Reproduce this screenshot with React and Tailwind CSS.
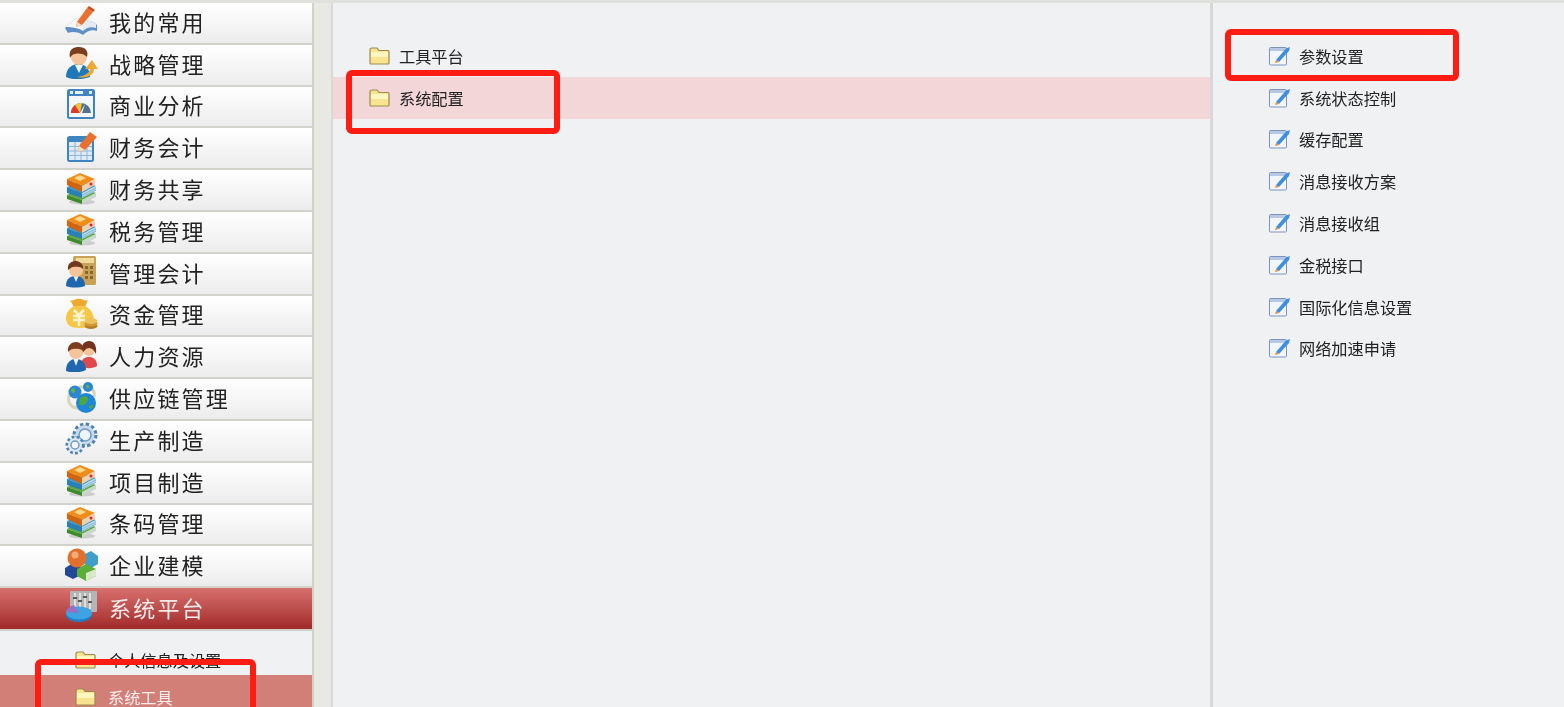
import React from "react";

const cjk = { fontFamily: '"Noto Sans CJK SC", "Liberation Sans", sans-serif' };

// small drawings for the menu
const Books = () => (
  <svg viewBox="0 0 33 33" className="w-[33px] h-[33px]">
    <ellipse cx="17" cy="30" rx="13" ry="2.5" fill="#aaa" opacity="0.5" />
    <path d="M2 23 L16 16 L31 21 L17 28 Z" fill="#5fa845" />
    <path d="M2 23 L17 28 L17 32 L2 27 Z" fill="#3f8a2c" />
    <path d="M17 28 L31 21 L31 25 L17 32 Z" fill="#c9d8cb" />
    <path d="M2 15 L16 9 L31 14 L17 21 Z" fill="#3b93c9" />
    <path d="M2 15 L17 21 L17 26 L2 21 Z" fill="#2a7fb5" />
    <path d="M17 21 L31 14 L31 19 L17 26 Z" fill="#bcdcec" />
    <path d="M17 23 L31 16 M17 25 L31 18" stroke="#5d9cc4" strokeWidth="0.6" />
    <path d="M2 7 L15 1 L30 7 L17 14 Z" fill="#f08c1a" />
    <path d="M2 7 L17 14 L17 20 L2 13 Z" fill="#d2640f" />
    <path d="M17 14 L30 7 L30 13 L17 20 Z" fill="#eed2b0" />
    <path d="M9 6 L15 3 L21 6 L15 9 Z" fill="#fbd78a" />
    <circle cx="26" cy="12" r="1.5" fill="#d8232a" />
  </svg>
);

const BookPencil = () => (
  <svg viewBox="0 0 33 33" className="w-[33px] h-[33px]">
    <path d="M0 24 L11 14 C15 14 17 16 18 18 C21 16 27 16 32 21 L32 27 C27 25 22 27 18 31 C14 28 7 27 3 29 Z" fill="#5f8fc4" />
    <path d="M1 23 L11 14 C15 14 17 16 18 18 L18 27 C14 24 7 23 1 23 Z" fill="#f5f7fa" />
    <path d="M18 18 C21 16 26 16 31 20 L31 24 C26 22 21 24 18 27 Z" fill="#e6ebf2" />
    <path d="M12 18 L22 4 L28 8 L17 21 L11 23 Z" fill="#e9702e" />
    <path d="M22 4 L24 2 L30 6 L28 8 Z" fill="#c94f1d" />
    <path d="M11 23 L12 18 L17 21 Z" fill="#f4dcc0" />
  </svg>
);

const UserArrow = () => (
  <svg viewBox="0 0 33 33" className="w-[33px] h-[33px]">
    <path d="M1 31 C1 22 7 18 14 18 C20 18 25 23 25 31 C16 34 7 34 1 31 Z" fill="#1f78b8" />
    <path d="M10 19 L14 27 L18 19 Z" fill="#f2f2f2" />
    <circle cx="14" cy="11" r="8" fill="#f4c49a" />
    <path d="M5 12 C3 3 9 1 14 1 C20 1 24 5 22 11 C19 7 12 7 10 8 C8 8 6 10 5 12 Z" fill="#7a3d1e" />
    <path d="M12 31 C21 30 25 26 25 23 L20 23 L27 14 L33 23 L29 23 C29 29 22 33 12 31 Z" fill="#eba838" />
  </svg>
);

const GaugeWin = () => (
  <svg viewBox="0 0 33 33" className="w-[33px] h-[33px]">
    <rect x="2" y="1" width="28" height="30" rx="2.5" fill="#3d84c0" />
    <rect x="4" y="8" width="24" height="21" fill="#f3f7fb" />
    <rect x="5" y="3" width="3" height="3" fill="#e3f0fa" />
    <rect x="10" y="3" width="8" height="3" fill="#e3f0fa" />
    <rect x="24" y="3" width="3" height="3" fill="#e3f0fa" />
    <path d="M6 25 A10 10 0 0 1 26 25 Z" fill="#54708f" />
    <path d="M6 25 A10 10 0 0 1 10 17 L15 25 Z" fill="#dd3a2a" />
    <path d="M10 17 A10 10 0 0 1 17 15 L15 25 Z" fill="#f1c232" />
    <path d="M15 25 L20 16 L17 25 Z" fill="#ffffff" />
  </svg>
);

const TablePencil = () => (
  <svg viewBox="0 0 33 33" className="w-[33px] h-[33px]">
    <rect x="2" y="6" width="27" height="26" rx="2.5" fill="#3d84c0" />
    <rect x="4" y="12" width="23" height="18" fill="#dfeaf4" />
    <path d="M4 16.5 H27 M4 21 H27 M4 25.5 H27 M10 12 V30 M16 12 V30 M22 12 V30" stroke="#8db7d9" strokeWidth="1" />
    <path d="M14 16 L25 2 L32 7 L20 20 L13 22 Z" fill="#e9702e" />
    <path d="M13 22 L14 16 L20 20 Z" fill="#f4dcc0" />
  </svg>
);

const CalcUser = () => (
  <svg viewBox="0 0 33 33" className="w-[33px] h-[33px]">
    <rect x="8" y="1" width="23" height="29" rx="1.5" fill="#c9a25a" />
    <rect x="11" y="3" width="18" height="5" fill="#f1dc9c" />
    <path d="M20 11 h3 v3 h-3z M25 11 h3 v3 h-3z M20 16 h3 v3 h-3z M25 16 h3 v3 h-3z M20 21 h3 v3 h-3z M25 21 h3 v3 h-3z" fill="#86682f" />
    <path d="M1 31 C1 23 6 21 11 21 C16 21 20 24 20 31 C14 33 6 33 1 31 Z" fill="#1f66ae" />
    <path d="M8.5 21 L11 27 L13.5 21 Z" fill="#eaf2fa" />
    <circle cx="11" cy="15" r="7" fill="#f4c49a" />
    <path d="M3 15 C2 8 7 6 11 6 C15 6 19 10 18 14 C15 11 10 12 8 12 C6 12 5 14 3 15 Z" fill="#6f3a1d" />
  </svg>
);

const MoneyBag = () => (
  <svg viewBox="0 0 33 33" className="w-[33px] h-[33px]">
    <path d="M5 3 C9 5 11 1 14 2 C17 1 19 5 23 3 L20 10 L9 10 Z" fill="#eeaa30" />
    <path d="M9 9 H20 C27 13 30 19 28 25 C26 30 20 31 14 31 C6 31 1 28 1 21 C1 16 4 12 9 9 Z" fill="#f6c648" />
    <path d="M9 13 L14 18 L19 13 M8 19 H20 M8 23 H20 M14 18 V29" stroke="#fff6cf" strokeWidth="2.6" fill="none" />
    <ellipse cx="26" cy="29" rx="6.5" ry="3" fill="#b77e25" />
    <ellipse cx="26" cy="26.5" rx="6.5" ry="3" fill="#d29a35" />
    <ellipse cx="26" cy="24" rx="6.5" ry="3" fill="#ecc25a" />
  </svg>
);

const People = () => (
  <svg viewBox="0 0 33 33" className="w-[33px] h-[33px]">
    <path d="M16 26 C16 20 20 18 24 18 C28 18 32 20 32 27 C27 30 20 30 16 26 Z" fill="#e0484a" />
    <circle cx="24" cy="11" r="6" fill="#f4c49a" />
    <path d="M17 15 C15 5 20 2 24 2 C29 2 32 6 31 15 C29 11 27 9 24 9 C21 9 19 12 17 15 Z" fill="#74331d" />
    <path d="M1 32 C1 23 6 20 11 20 C17 20 21 24 21 31 C15 34 6 34 1 32 Z" fill="#1f66ae" />
    <path d="M8.5 20 L11 27 L13.5 20 Z" fill="#eaf2fa" />
    <circle cx="11" cy="13" r="7" fill="#f4c49a" />
    <path d="M3 13 C2 6 7 3 11 3 C16 3 20 8 18 12 C15 9 10 10 8 10 C6 10 4 12 3 13 Z" fill="#7a3d1e" />
  </svg>
);

const Globes = () => (
  <svg viewBox="0 0 33 33" className="w-[33px] h-[33px]">
    <path d="M8 10 C2 14 2 22 8 26 L15 28 M14 6 H24 C29 8 30 12 29 16" stroke="#d9d5b8" strokeWidth="3" fill="none" />
    <circle cx="10" cy="11" r="6.5" fill="#2f86d0" />
    <path d="M6 8 C9 6 11 8 10 11 C8 13 6 12 6 8 Z" fill="#5db24a" />
    <circle cx="23" cy="6" r="5" fill="#2f86d0" />
    <path d="M21 4 C23 3 25 5 24 7 C22 8 21 7 21 4 Z" fill="#5db24a" />
    <circle cx="21" cy="22" r="10" fill="#1f86d8" />
    <path d="M15 17 C18 14 24 15 23 19 C21 24 17 26 14 23 Z M24 25 C27 23 29 24 28 26 C26 29 24 28 24 25 Z" fill="#4ea83f" />
  </svg>
);

const Gears = () => (
  <svg viewBox="0 0 33 33" className="w-[33px] h-[33px]">
    <circle cx="20" cy="13" r="10" fill="#c6d9ea" />
    <circle cx="20" cy="13" r="11" fill="none" stroke="#4f82b0" strokeWidth="3" strokeDasharray="3.4 2.4" />
    <circle cx="20" cy="13" r="6" fill="#eef3f8" stroke="#6f9cc4" strokeWidth="1.5" />
    <circle cx="10" cy="23" r="8" fill="#dbe7f1" />
    <circle cx="10" cy="23" r="8.2" fill="none" stroke="#4f82b0" strokeWidth="2.6" strokeDasharray="2.8 2.2" />
    <circle cx="10" cy="23" r="4" fill="#f5f5f5" stroke="#6f9cc4" strokeWidth="1.5" />
  </svg>
);

const Blocks = () => (
  <svg viewBox="0 0 33 33" className="w-[33px] h-[33px]">
    <path d="M18 7 L26 3 L33 8 L33 16 L26 20 L18 15 Z" fill="#3f9fc9" />
    <path d="M0 20 L8 15 L16 19 L16 27 L8 31 L0 27 Z" fill="#24479a" />
    <path d="M12 21 L21 16 L31 21 L31 28 L21 33 L12 28 Z" fill="#5cae3a" />
    <path d="M21 25 L31 21 L31 28 L21 33 Z" fill="#d9e8c8" />
    <circle cx="12" cy="10" r="9.5" fill="#e0702c" />
    <circle cx="10" cy="7" r="3.5" fill="#f5ab74" />
  </svg>
);

const Sliders = () => (
  <svg viewBox="0 0 33 33" className="w-[33px] h-[33px]">
    <rect x="5" y="1" width="27" height="21" rx="1" fill="#b5b5b5" />
    <path d="M10 3 V19 M15 3 V19 M20 3 V19 M25 3 V19" stroke="#f2f2f2" strokeWidth="1.4" />
    <path d="M8 8 h4 M13 11 h4 M18 7 h4 M23 12 h4" stroke="#5a5a5a" strokeWidth="2" />
    <ellipse cx="14" cy="25" rx="13" ry="7" fill="#1f7fc7" />
    <ellipse cx="14" cy="23" rx="13" ry="6.5" fill="#3ea3e3" />
    <path d="M1 22 L14 23 L9 15 C5 16 2 18 1 22 Z" fill="#9a6ec0" />
  </svg>
);

const Folder = () => (
  <svg viewBox="0 0 21 18" className="w-[21px] h-[18px]">
    <path d="M1 3 C1 1.5 2 1 3 1 H8 L10 3.5 H19 C19.6 3.5 20 4 20 4.5 V16 C20 16.6 19.6 17 19 17 H2 C1.4 17 1 16.6 1 16 Z" fill="#f8e48e" stroke="#9c8a52" strokeWidth="1.2" />
    <path d="M2 5 H19 V10 H2 Z" fill="#fff6c0" />
  </svg>
);

const NoteEdit = () => (
  <svg viewBox="0 0 22 20" className="w-[22px] h-[20px]">
    <rect x="0.5" y="1.5" width="17" height="17.5" rx="1" fill="#f2f6fb" stroke="#7c93be" />
    <rect x="1" y="2" width="16" height="3" fill="#b6c8e4" />
    <path d="M7 14 L17 2.5 L21 1 L20 5 L10 16 Z" fill="#3f8fe0" />
    <path d="M6 17 L7 14 L10 16 Z" fill="#ef8a2a" />
  </svg>
);

const menu = [
  { name: "我的常用", icon: BookPencil },
  { name: "战略管理", icon: UserArrow },
  { name: "商业分析", icon: GaugeWin },
  { name: "财务会计", icon: TablePencil },
  { name: "财务共享", icon: Books },
  { name: "税务管理", icon: Books },
  { name: "管理会计", icon: CalcUser },
  { name: "资金管理", icon: MoneyBag },
  { name: "人力资源", icon: People },
  { name: "供应链管理", icon: Globes },
  { name: "生产制造", icon: Gears },
  { name: "项目制造", icon: Books },
  { name: "条码管理", icon: Books },
  { name: "企业建模", icon: Blocks },
];

const settings = [
  "参数设置",
  "系统状态控制",
  "缓存配置",
  "消息接收方案",
  "消息接收组",
  "金税接口",
  "国际化信息设置",
  "网络加速申请",
];

const MenuRow = ({ name, icon: Icon }) => (
  <div className="flex items-center shrink-0 h-[41.8px] pl-[65px] pb-[4px] gap-[11px] border-b-2 border-[#d2d2cc] bg-gradient-to-b from-white to-[#ececec]">
    <Icon />
    <span className="text-[22px] leading-[24px] tracking-[2.2px] text-[#222]">{name}</span>
  </div>
);

const RedBox = ({ className }) => (
  <div className={`absolute border-[6px] border-[#ff1c12] rounded-[6px] ${className}`} />
);

export default function App() {
  return (
    <div style={cjk} className="relative h-[707px] w-full overflow-hidden flex flex-col bg-[#e8e8e4] blur-[0.4px]">
      <div className="h-[3px] shrink-0 bg-[#e0e0dc]" />
      <div className="flex flex-1 min-h-0">
        {/* left menu */}
        <div className="w-[314px] shrink-0 flex flex-col border-r-2 border-[#d2d2cc] bg-[#f0f1f3]">
          {menu.map((m) => (
            <MenuRow key={m.name} {...m} />
          ))}
          <div className="flex items-center shrink-0 h-[43px] pl-[65px] pb-[4px] gap-[11px] border-b-2 border-[#cfcfca] bg-gradient-to-b from-[#d8706e] to-[#a0282a]">
            <Sliders />
            <span className="text-[22px] leading-[24px] tracking-[2.2px] text-[#f6eaea]">系统平台</span>
          </div>
          <div className="pt-[8px]">
            <div className="flex items-center shrink-0 h-[36px] pt-[5px] pl-[75px] gap-[12px] text-[16.2px] leading-[16px] text-[#222]">
              <Folder />
              个人信息及设置
            </div>
            <div className="flex items-center shrink-0 h-[32px] pt-[12px] pl-[75px] gap-[12px] text-[16.2px] leading-[16px] text-[#f8eeee] bg-[#d27f78]">
              <Folder />
              系统工具
            </div>
          </div>
        </div>

        {/* folders */}
        <div className="ml-[17px] flex-1 min-w-0 border-l-2 border-[#d8d8d4] bg-[#f0f1f3] pt-[32px]">
          <div className="flex items-center h-[41.8px] pl-[36px] gap-[9px] text-[16.2px] text-[#222]">
            <Folder />
            工具平台
          </div>
          <div className="flex items-center h-[41.8px] pl-[36px] gap-[9px] text-[16.2px] text-[#222] bg-[#f3d6d7]">
            <Folder />
            系统配置
          </div>
        </div>

        {/* settings list */}
        <div className="w-[354px] shrink-0 border-l-[3px] border-[#d8d8d6] bg-[#f0f1f3] pt-[32px]">
          {settings.map((s) => (
            <div key={s} className="flex items-center h-[41.8px] pl-[56px] gap-[8px] text-[16.2px] text-[#222]">
              <NoteEdit />
              {s}
            </div>
          ))}
        </div>
      </div>

      {/* hand drawn annotations over the screenshot */}
      <RedBox className="left-[35px] top-[659px] w-[221px] h-[70px]" />
      <RedBox className="left-[346px] top-[70px] w-[214px] h-[64px]" />
      <RedBox className="left-[1225px] top-[29px] w-[234px] h-[52px]" />
    </div>
  );
}
